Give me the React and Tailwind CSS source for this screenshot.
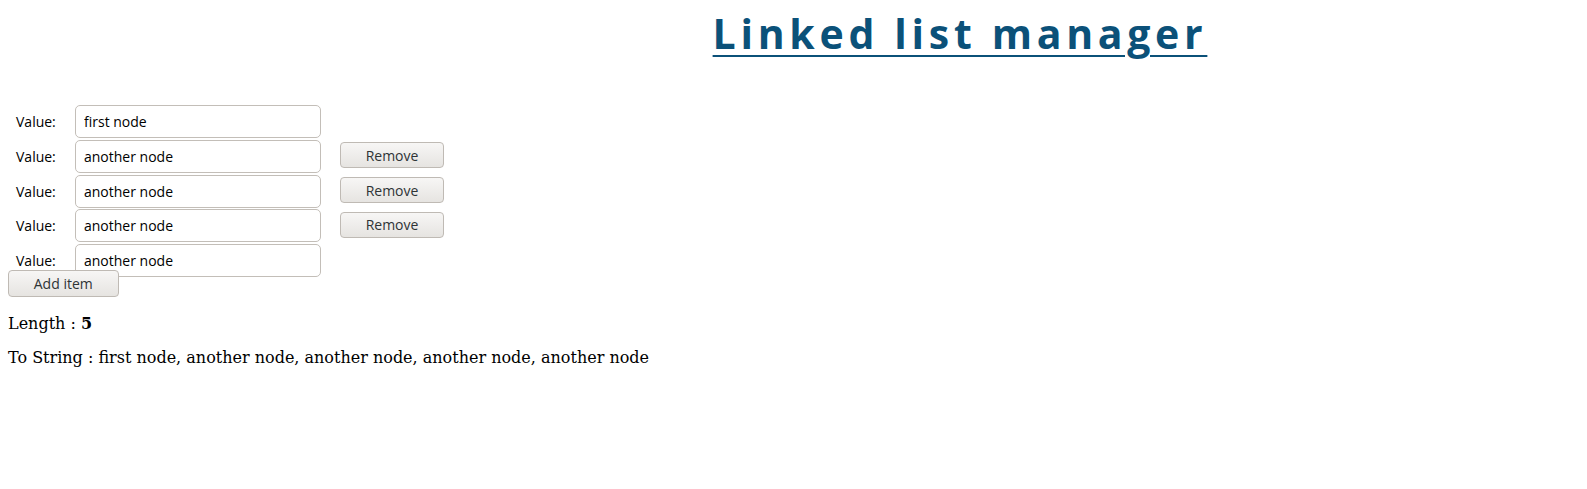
import React, { useState } from 'react';

const inputFont = "font-['Open_Sans',sans-serif]";

const App = () => {
  const [items, setItems] = useState([
    'first node',
    'another node',
    'another node',
    'another node',
    'another node'
  ]);

  const updateItem = (index, value) => {
    setItems(items.map((item, i) => (i === index ? value : item)));
  };

  const removeItem = (index) => {
    setItems(items.filter((_, i) => i !== index));
  };

  const addItem = () => {
    setItems([...items, 'another node']);
  };

  return (
    <div className="min-h-[489px] bg-white text-black">
      {/* Title */}
      <div className="h-[105px] pt-[12.5px] pl-[333px] flex justify-center">
        <h1 className="font-['Open_Sans',sans-serif] font-bold text-[41px] leading-[41px] tracking-[4.7px] text-[#0b5179] underline decoration-[1.5px] underline-offset-[6px]">
          Linked list manager
        </h1>
      </div>

      {/* Nodes */}
      <div className="flex flex-col">
        {items.map((item, index) => {
          const isLast = index === items.length - 1;
          return (
            <div
              key={index}
              className={`flex items-start ${isLast ? 'h-[26px]' : 'h-[34.75px]'}`}
            >
              <label className={`${inputFont} text-[14px] h-[33px] w-[75px] pl-[16px] flex items-center shrink-0`}>
                Value:
              </label>
              <input
                value={item}
                onChange={(e) => updateItem(index, e.target.value)}
                className={`${inputFont} text-[14px] w-[246px] h-[33px] shrink-0 rounded-[5px] border border-[#c3beb8] bg-white px-[8px] outline-none`}
              />
              {index > 0 && !isLast && (
                <button
                  onClick={() => removeItem(index)}
                  className={`${inputFont} text-[14px] text-[#2e3436] ml-[19px] mt-[2.5px] w-[104px] h-[26px] rounded-[4px] border border-[#bfbab4] bg-gradient-to-b from-[#f7f6f5] to-[#e6e4e1]`}
                >
                  Remove
                </button>
              )}
            </div>
          );
        })}
        <div className="relative">
          <button
            onClick={addItem}
            className={`${inputFont} text-[14px] text-[#2e3436] ml-[8px] w-[110.5px] h-[26.7px] rounded-[4px] border border-[#bfbab4] bg-gradient-to-b from-[#f7f6f5] to-[#e6e4e1]`}
          >
            Add item
          </button>
        </div>
      </div>

      {/* Summary */}
      <div className="font-['DejaVu_Serif',serif] text-[16px] leading-[18.5px] px-[8px]">
        <p className="mt-[18px] mb-[16px]">
          Length : <b>{items.length}</b>
        </p>
        <p className="my-[16px]">To String : {items.join(', ')}</p>
      </div>
    </div>
  );
};

export default App;
